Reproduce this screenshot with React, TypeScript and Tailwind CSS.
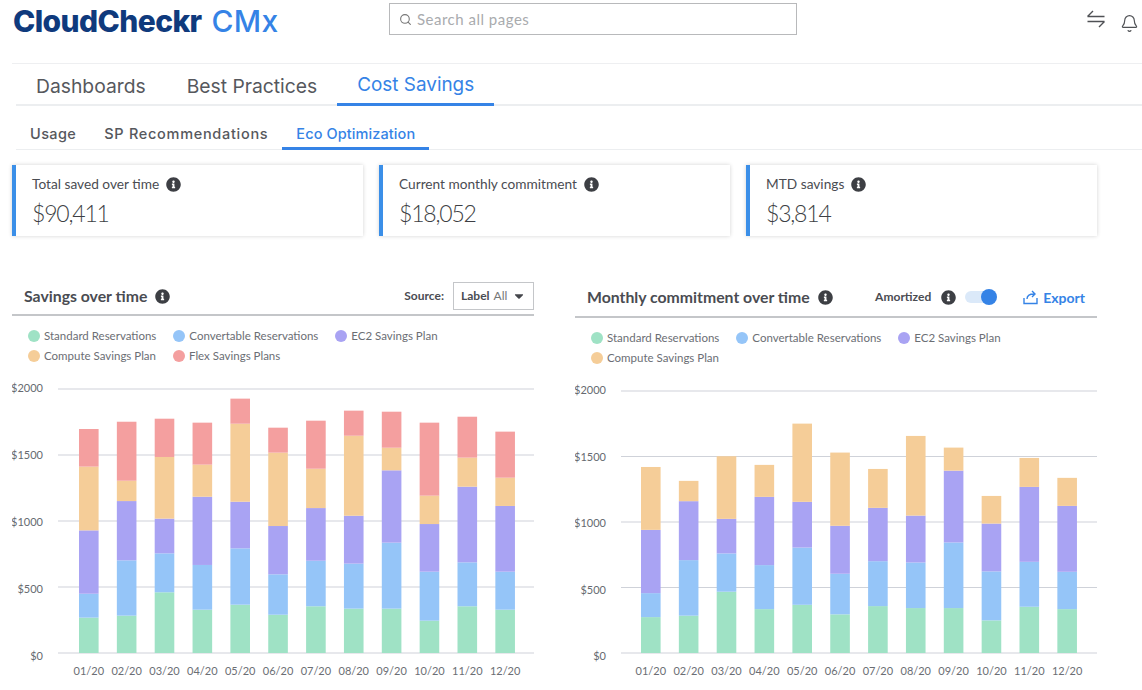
import React from 'react';
import { Bell, Search } from 'lucide-react';
import { FaCaretDown, FaInfoCircle } from 'react-icons/fa';

const months = ['01/20', '02/20', '03/20', '04/20', '05/20', '06/20', '07/20', '08/20', '09/20', '10/20', '11/20', '12/20'];
const colors = ['#9fe2c5', '#95c5f8', '#a9a3f3', '#f5cd98', '#f49f9f'];
const ticks = [0, 500, 1000, 1500, 2000];

// cumulative top of each stacked segment per month
const savings = [
  [268, 449, 929, 1412, 1697],
  [283, 702, 1151, 1305, 1752],
  [460, 755, 1018, 1485, 1775],
  [328, 667, 1184, 1427, 1745],
  [366, 793, 1146, 1737, 1927],
  [290, 596, 962, 1518, 1707],
  [354, 699, 1098, 1396, 1760],
  [336, 677, 1040, 1646, 1836],
  [336, 836, 1384, 1555, 1828],
  [245, 616, 977, 1192, 1745],
  [354, 687, 1260, 1480, 1790],
  [328, 616, 1114, 1328, 1677],
];

const commitment = [
  [274, 457, 940, 1420],
  [285, 709, 1159, 1314],
  [468, 760, 1024, 1502],
  [335, 671, 1192, 1436],
  [368, 805, 1154, 1751],
  [295, 605, 971, 1530],
  [358, 701, 1108, 1405],
  [343, 691, 1049, 1657],
  [343, 844, 1392, 1568],
  [249, 623, 988, 1199],
  [353, 696, 1268, 1489],
  [335, 620, 1123, 1337],
];

const stats = [
  { label: 'Total saved over time', value: '$90,411' },
  { label: 'Current monthly commitment', value: '$18,052' },
  { label: 'MTD savings', value: '$3,814' },
];

const Info = () => <FaInfoCircle className="h-[15px] w-[15px] shrink-0 text-[#3d3f44]" />;

function Legend({ rows }: { rows: [string, string][][] }) {
  return (
    <div className="flex flex-col gap-[6px] pl-4 text-[11.5px] leading-[14px] text-[#6b6e74]">
      {rows.map((row, i) => (
        <div key={i} className="flex gap-[17px]">
          {row.map(([name, color]) => (
            <div key={name} className="flex items-center gap-[4px]">
              <span className="h-[12px] w-[12px] rounded-full" style={{ backgroundColor: color }} />
              <span>{name}</span>
            </div>
          ))}
        </div>
      ))}
    </div>
  );
}

function StackedChart({ data, top, firstBar }: { data: number[][]; top: number; firstBar: number }) {
  const zero = 273;
  const scale = (zero - top) / 2000;
  return (
    <svg width="522" height="306" className="block">
      {ticks.map((t) => {
        const y = zero - t * scale;
        return (
          <g key={t}>
            <line x1="46" x2="522" y1={y} y2={y} stroke="#cfd2d9" strokeWidth="1.2" />
            {/* axis labels sit a little lower than their line toward the bottom */}
            <text x="31" y={y + 3 + (2000 - t) * 0.002} textAnchor="end" className="fill-[#666a70] text-[11px]">
              ${t}
            </text>
          </g>
        );
      })}
      {data.map((bar, m) => {
        const x = firstBar + m * 37.85;
        return (
          <g key={m}>
            {bar.map((v, s) => {
              const prev = s === 0 ? 0 : bar[s - 1];
              return <rect key={s} x={x} y={zero - v * scale} width="19.6" height={(v - prev) * scale} fill={colors[s]} />;
            })}
            <text x={x + 9.8} y="295" textAnchor="middle" className="fill-[#6b6e74] text-[11px]">
              {months[m]}
            </text>
          </g>
        );
      })}
    </svg>
  );
}

export default function App() {
  return (
    <div className="h-[690px] w-[1142px] overflow-hidden bg-white font-['Lato',sans-serif] text-[#4a4c52]">
      {/* Header */}
      <header className="ml-3 flex h-[64px] items-start border-b border-[#eeeff1] pt-[3px]">
        <div className="ml-px w-[376px] font-['Inter',sans-serif] text-[30px] leading-[36px] font-extrabold tracking-[-0.6px] text-[#0f3a7d]">
          CloudCheckr <span className="ml-[4px] font-medium tracking-[0.3px] text-[#3583e6]">CMx</span>
        </div>
        <div className="flex h-[32px] w-[408px] items-center gap-[5px] border border-[#b8b9bb] pl-[9px] text-[15px] tracking-[0.5px] text-[#a9abae]">
          <Search className="h-[13px] w-[13px] text-[#777]" strokeWidth={2} />
          Search all pages
        </div>
        <div className="ml-auto flex items-start gap-[15px] pr-[3px] pt-[7px] text-[#4f5155]">
          <svg width="18" height="18" viewBox="0 0 18 18" fill="none" stroke="currentColor" strokeWidth="1.4">
            <path d="M0.5 6.5h17M0.5 6.5L6 1M17.5 11.5H0.5M17.5 11.5L12 17" />
          </svg>
          <Bell className="mt-[2px] h-[23px] w-[19px]" strokeWidth={1.5} />
        </div>
      </header>

      {/* Main tabs */}
      <nav className="ml-4 flex h-[42px] border-b-2 border-[#eceef0] font-['Inter',sans-serif] text-[19.3px]">
        <div className="flex items-center pt-1 pr-[21px] pl-5 text-[#56585d]">Dashboards</div>
        <div className="flex items-center px-5 pt-1 text-[#56585d]">Best Practices</div>
        <div className="-mb-[2px] flex items-center border-b-[3px] border-[#3583e6] px-5 pt-1 text-[18.9px] text-[#3583e6]">Cost Savings</div>
      </nav>

      {/* Sub tabs */}
      <nav className="ml-4 flex h-[44px] border-b border-[#eceef0] font-['Inter',sans-serif] text-[14.5px] font-medium">
        <div className="flex items-center px-[14px] pt-[13px] tracking-[0.4px] text-[#56585d]">Usage</div>
        <div className="flex items-center px-[14px] pt-[13px] tracking-[0.7px] text-[#56585d]">SP Recommendations</div>
        <div className="-mb-px flex items-center border-b-[3px] border-[#3583e6] px-[14px] pt-[15px] tracking-[0.1px] text-[#3583e6]">Eco Optimization</div>
      </nav>

      {/* Stat cards */}
      <section className="mt-[15px] ml-3 flex gap-[16px]">
        {stats.map((s) => (
          <div key={s.label} className="h-[71px] w-[351px] border-l-4 border-[#3b8fe8] pt-[9px] pl-[16px] shadow-[0_0_4px_rgba(0,0,0,0.18)]">
            <div className="flex items-center gap-[7px] text-[13.7px] leading-[20px]">
              {s.label}
              <Info />
            </div>
            <div className="mt-[5px] text-[23px] leading-[28px] font-light tracking-[-1.2px] text-[#3d3f44]">{s.value}</div>
          </div>
        ))}
      </section>

      {/* Charts */}
      <section className="mt-[44px] ml-3 flex gap-[41px]">
        <div className="w-[522px]">
          <div className="flex h-[36px] items-center border-b-2 border-[#c4c6c9] pb-[2px] pl-3">
            <span className="text-[15.8px] font-bold">Savings over time</span>
            <span className="ml-[8px]"><Info /></span>
            <span className="ml-auto text-[12px] font-bold">Source:</span>
            <div className="mt-[2px] ml-[9px] flex h-[28px] w-[81px] items-center self-start border border-[#c4c6c9] pl-[7px] text-[12px]">
              <span className="font-bold">Label</span>
              <span className="ml-1 text-[#777]">All</span>
              <FaCaretDown className="ml-[5px] h-[14px] w-[14px] text-[#44464b]" />
            </div>
          </div>
          <div className="mt-[13px]">
            <Legend
              rows={[
                [['Standard Reservations', colors[0]], ['Convertable Reservations', colors[1]], ['EC2 Savings Plan', colors[2]]],
                [['Compute Savings Plan', colors[3]], ['Flex Savings Plans', colors[4]]],
              ]}
            />
          </div>
          <div className="mt-[17px]">
            <StackedChart data={savings} top={9} firstBar={67} />
          </div>
        </div>

        <div className="w-[522px]">
          <div className="flex h-[38px] items-center border-b-2 border-[#c4c6c9] pb-[2px] pl-3 pr-3">
            <span className="text-[15.8px] font-bold">Monthly commitment over time</span>
            <span className="ml-[8px]"><Info /></span>
            <span className="ml-auto text-[12px] font-bold">Amortized</span>
            <span className="ml-[10px]"><Info /></span>
            {/* toggle */}
            <div className="relative ml-[9px] h-[12px] w-[30px] rounded-full bg-[#dbe9f9]">
              <span className="absolute -top-[2px] -right-[2px] h-[16px] w-[16px] rounded-full bg-[#3583e6]" />
            </div>
            <svg className="ml-[28px]" width="15" height="15" viewBox="0 0 15 15" fill="none" stroke="#3583e6" strokeWidth="1.4">
              <path d="M1 8v5.5h13V8M4 9c0-3.5 3-5 7-5M9 1l3 3-3 3" />
            </svg>
            <span className="ml-[5px] text-[14px] font-bold text-[#3583e6]">Export</span>
          </div>
          <div className="mt-[13px]">
            <Legend
              rows={[
                [['Standard Reservations', colors[0]], ['Convertable Reservations', colors[1]], ['EC2 Savings Plan', colors[2]]],
                [['Compute Savings Plan', colors[3]]],
              ]}
            />
          </div>
          <div className="mt-[15px]">
            <StackedChart data={commitment} top={11} firstBar={66} />
          </div>
        </div>
      </section>
    </div>
  );
}
